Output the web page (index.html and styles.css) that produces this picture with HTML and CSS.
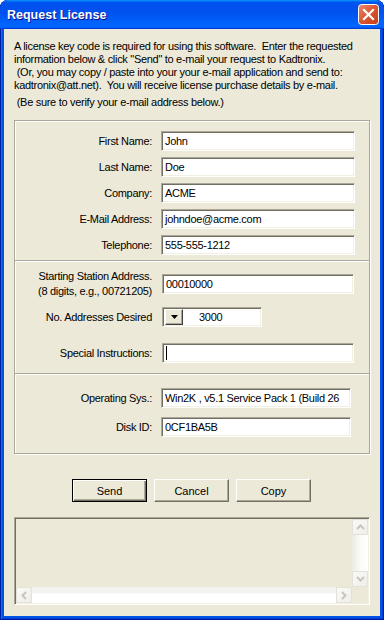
FILE: index.html
```html
<!DOCTYPE html>
<html lang="en">
<head>
    <meta charset="UTF-8">
    <meta name="viewport" content="width=device-width, initial-scale=1.0">
    <title>Request License</title>
    <link rel="stylesheet" href="styles.css">
</head>
<body>

    <div class="window">
        <div class="titlebar">
            <span class="title">Request License</span>
            <span class="close">
                <svg width="21" height="21" viewBox="0 0 21 21">
                    <defs>
                        <linearGradient id="closeFill" x1="0" y1="0" x2="1" y2="1">
                            <stop offset="0" stop-color="#ea8c70"/>
                            <stop offset="0.45" stop-color="#dc5a36"/>
                            <stop offset="1" stop-color="#c43c16"/>
                        </linearGradient>
                    </defs>
                    <rect x="0.5" y="0.5" width="20" height="20" rx="3" fill="url(#closeFill)" stroke="#fff"/>
                    <path d="M6 6 L15 15 M15 6 L6 15" stroke="#fff" stroke-width="2.2" stroke-linecap="square"/>
                </svg>
            </span>
        </div>

        <div class="client">
            <p class="intro">A license key code is required for using this software.&nbsp; Enter the requested<br>information below &amp; click "Send" to e-mail your request to Kadtronix.<br>&nbsp;(Or, you may copy / paste into your your e-mail application and send to:<br>kadtronix@att.net).&nbsp; You will receive license purchase details by e-mail.</p>
            <p class="intro note">&nbsp;(Be sure to verify your e-mail address below.)</p>

            <div class="group">
                <div class="section contact">
                    <div class="row"><span class="label">First Name:</span><div class="edit">John</div></div>
                    <div class="row"><span class="label">Last Name:</span><div class="edit">Doe</div></div>
                    <div class="row"><span class="label">Company:</span><div class="edit">ACME</div></div>
                    <div class="row"><span class="label">E-Mail Address:</span><div class="edit">johndoe@acme.com</div></div>
                    <div class="row"><span class="label">Telephone:</span><div class="edit">555-555-1212</div></div>
                </div>

                <div class="section station">
                    <div class="row"><span class="label two-line">Starting Station Address.<br>(8 digits, e.g., 00721205)</span><div class="edit">00010000</div></div>
                    <div class="row count">
                        <span class="label">No. Addresses Desired</span>
                        <div class="edit spin">
                            <span class="drop"><svg width="7" height="4" viewBox="0 0 7 4"><polygon points="0,0 7,0 3.5,4" fill="#000"/></svg></span>
                            <span class="spin-value">3000</span>
                        </div>
                    </div>
                    <div class="row special"><span class="label">Special Instructions:</span><div class="edit"><span class="caret"></span></div></div>
                </div>

                <div class="section system">
                    <div class="row"><span class="label">Operating Sys.:</span><div class="edit">Win2K , v5.1 Service Pack 1 (Build 26</div></div>
                    <div class="row"><span class="label">Disk ID:</span><div class="edit">0CF1BA5B</div></div>
                </div>
            </div>

            <div class="buttons">
                <button class="btn default">Send</button>
                <button class="btn">Cancel</button>
                <button class="btn">Copy</button>
            </div>

            <div class="log">
                <div class="log-body"></div>
                <div class="vscroll">
                    <span class="sbtn"><svg width="9" height="6" viewBox="0 0 9 6"><polyline points="1,5 4.5,1.5 8,5" fill="none" stroke="#c6c6be" stroke-width="2"/></svg></span>
                    <span class="vtrack"></span>
                    <span class="sbtn"><svg width="9" height="6" viewBox="0 0 9 6"><polyline points="1,1 4.5,4.5 8,1" fill="none" stroke="#c6c6be" stroke-width="2"/></svg></span>
                </div>
                <div class="hscroll">
                    <span class="sbtn"><svg width="6" height="9" viewBox="0 0 6 9"><polyline points="5,1 1.5,4.5 5,8" fill="none" stroke="#c6c6be" stroke-width="2"/></svg></span>
                    <span class="htrack"></span>
                    <span class="sbtn"><svg width="6" height="9" viewBox="0 0 6 9"><polyline points="1,1 4.5,4.5 1,8" fill="none" stroke="#c6c6be" stroke-width="2"/></svg></span>
                </div>
                <div class="corner"></div>
            </div>
        </div>
    </div>

</body>
</html>
```

FILE: styles.css
```css
body {
    margin: 0;
    background: #fff;
    font-family: "Liberation Sans", Arial, sans-serif;
    font-size: 11px;
    letter-spacing: -0.3px;
    color: #000;
}
.window {
    width: 384px;
    height: 620px;
    box-sizing: border-box;
    display: flex;
    flex-direction: column;
    background: #0054e3;
    border-radius: 8px 8px 0 0;
    overflow: hidden;
    box-shadow: inset 1px 0 #001ea0, inset -1px 0 #001ea0, inset 0 -1px #001ea0, inset 2px 0 #166aee, inset -2px 0 #003bda, inset 0 -2px #003bda;
}
.titlebar {
    flex: none;
    height: 29px;
    display: flex;
    align-items: center;
    justify-content: space-between;
    padding: 0 5px 0 7px;
    background: linear-gradient(180deg, #0997ff, #0053ee 8%, #0050ee 40%, #06f 88%, #06f 93%, #005bff 95%, #003dd7 96%, #003dd7);
    border-radius: 8px 8px 0 0;
}
.title {
    color: #fff;
    font-weight: bold;
    font-size: 12.5px;
    letter-spacing: 0;
    text-shadow: 1px 1px #0f1089;
    padding-top: 1px;
}
.close {
    display: flex;
    width: 21px;
    height: 21px;
}
.client {
    flex: 1;
    margin: 0 4px 4px;
    background: #ece9d8;
    padding: 11px 10px 0;
}
.intro {
    margin: 0;
    line-height: 13px;
}
.note {
    margin-top: 4px;
}
.group {
    margin-top: 11px;
    border: 1px solid #aca899;
    box-shadow: 1px 1px 0 #fff, inset 1px 1px 0 #fff;
}
.section {
    display: flex;
    flex-direction: column;
}
.section + .section {
    border-top: 1px solid #aca899;
    box-shadow: inset 0 1px 0 #fff;
}
.contact {
    gap: 6px;
    padding: 10px 0 5px;
}
.station {
    padding: 13px 0 10px;
}
.station .count {
    margin-top: 13px;
}
.station .special {
    margin-top: 16px;
}
.system {
    gap: 9px;
    padding: 14px 0 16px;
}
.row {
    display: flex;
    align-items: center;
    height: 20px;
}
.label {
    width: 137px;
    flex: none;
    margin-right: 9px;
    text-align: right;
    white-space: nowrap;
}
.two-line {
    line-height: 15px;
}
.edit {
    box-sizing: border-box;
    width: 194px;
    height: 20px;
    padding: 0 3px;
    display: flex;
    align-items: center;
    overflow: hidden;
    white-space: nowrap;
    background: #fff;
    border: 1px solid;
    border-color: #aca899 #fff #fff #aca899;
    box-shadow: inset 1px 1px 0 #716f64, inset -1px -1px 0 #f1efe2;
}
.station .edit {
    width: 192px;
    margin-left: 1px;
}
.system .edit {
    width: 190px;
}
.station .spin {
    width: 100px;
    padding: 2px 0 2px 2px;
}
.drop {
    box-sizing: border-box;
    width: 18px;
    height: 16px;
    display: flex;
    align-items: center;
    justify-content: center;
    background: #ece9d8;
    border: 1px solid;
    border-color: #fff #404040 #404040 #fff;
    box-shadow: inset -1px -1px 0 #aca899;
}
.spin-value {
    margin-left: 16px;
}
.caret {
    width: 1px;
    height: 14px;
    background: #000;
}
.buttons {
    display: flex;
    gap: 7px;
    margin-top: 25px;
    padding-left: 58px;
}
.btn {
    box-sizing: border-box;
    width: 75px;
    height: 23px;
    padding: 0;
    font: inherit;
    color: #000;
    background: #ece9d8;
    border: 1px solid;
    border-color: #fff #716f64 #716f64 #fff;
    box-shadow: inset -1px -1px 0 #aca899;
}
.btn.default {
    border-color: #000;
    box-shadow: inset 1px 1px 0 #fff, inset -1px -1px 0 #716f64, inset -2px -2px 0 #aca899;
}
.log {
    box-sizing: border-box;
    height: 88px;
    margin-top: 15px;
    padding: 1px;
    display: grid;
    grid-template-columns: 1fr 16px;
    grid-template-rows: 1fr 16px;
    border: 1px solid;
    border-color: #aca899 #fff #fff #aca899;
    box-shadow: inset 1px 1px 0 #716f64, inset -1px -1px 0 #f1efe2;
}
.vscroll {
    display: flex;
    flex-direction: column;
}
.hscroll {
    display: flex;
}
.sbtn {
    box-sizing: border-box;
    flex: none;
    width: 16px;
    height: 16px;
    display: flex;
    align-items: center;
    justify-content: center;
    border: 1px solid #e3e2da;
    border-radius: 2px;
    background: linear-gradient(135deg, #fafaf8, #efeee8);
}
.vtrack {
    flex: 1;
    background: linear-gradient(90deg, #ecebe4, #fbfbf9 55%, #fff);
}
.htrack {
    flex: 1;
    background: linear-gradient(180deg, #f3f2ee, #f4f4f0 35%, #fff 45%);
}
```
